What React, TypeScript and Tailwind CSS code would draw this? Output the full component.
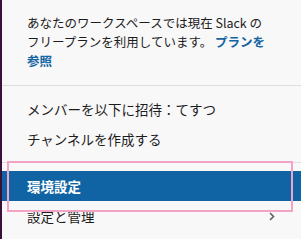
import React from 'react';

const font = { fontFamily: '"Noto Sans CJK JP", "Liberation Sans", sans-serif' };

const MenuItem: React.FC<{ label: string; active?: boolean; chevron?: boolean }> = ({ label, active, chevron }) => (
  <div
    className={`flex h-[30px] items-center justify-between pl-[25px] pr-[26px] text-[13.5px] ${
      active ? 'bg-[#1164a3] font-bold text-white' : 'text-[#1d1c1d]'
    }`}
  >
    <span>{label}</span>
    {chevron && (
      <svg width="6" height="9" viewBox="0 0 6 9" className="text-[#616061]">
        <path d="M1 1l3.5 3.5L1 8" fill="none" stroke="currentColor" strokeWidth="1.6" />
      </svg>
    )}
  </div>
);

export default function App() {
  return (
    <div className="relative flex h-[239px] w-[301px] overflow-hidden bg-[#f8f8f8]" style={font}>
      <div className="w-[2px] shrink-0 bg-[#3b0f3c]" />
      <div className="flex-1">
        {/* plan notice */}
        <div className="pl-[25px] pr-4 pt-[13px] pb-[15px] text-[12.5px] leading-[19px] text-[#1d1c1d]">
          あなたのワークスペースでは現在 Slack の
          <br />
          フリープランを利用しています。 <span className="font-bold text-[#1264a3]">プランを</span>
          <br />
          <span className="font-bold text-[#1264a3]">参照</span>
        </div>
        <div className="h-px bg-[#dddddd]" />
        <div className="py-2">
          <MenuItem label="メンバーを以下に招待：てすつ" />
          <MenuItem label="チャンネルを作成する" />
        </div>
        <div className="h-px bg-[#dddddd]" />
        <div className="py-2">
          <MenuItem label="環境設定" active />
          <MenuItem label="設定と管理" chevron />
        </div>
      </div>
      {/* highlight annotation */}
      <div className="absolute left-[7px] top-[161px] h-[51px] w-[286px] border-[2.5px] border-[#f2a3c6]" />
    </div>
  );
}
